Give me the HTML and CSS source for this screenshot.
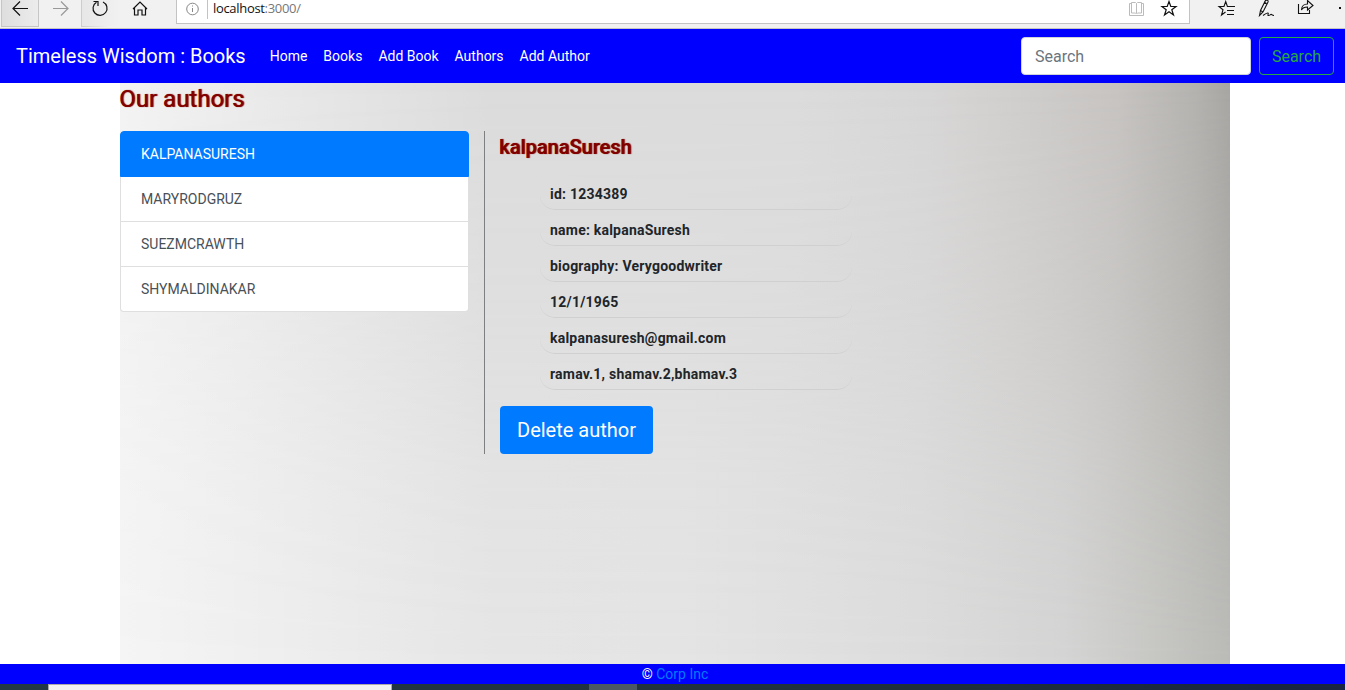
FILE: index.html
```
<!DOCTYPE html>
<html lang="en">
<head>
<meta charset="utf-8">
<title>Timeless Wisdom : Books</title>
<link rel="stylesheet" href="styles.css">
</head>
<body>
<div class="browser">
  <div class="tool back"><svg width="37" height="26" viewBox="2 0 37 26"><path d="M13 8.500h15M20 1.500l-7 7 7 7"/></svg></div>
  <div class="tool forward"><svg width="42" height="26" viewBox="39 0 42 26"><path d="M53 8.500h15M61 1.500l7 7-7 7"/></svg></div>
  <div class="tool reload"><svg width="38" height="26" viewBox="82 0 38 26"><path d="M103 2a7 7 0 1 1-6.500.3M93.500 1.500h4.500v4.500"/></svg></div>
  <div class="tool home"><svg width="56" height="26" viewBox="120 0 56 26"><path d="M133 9l7-7 7 7M134.500 8v7h3.500v-5h4v5h3.500V8"/></svg></div>
  <div class="address">
    <svg class="info" width="30" height="23" viewBox="177 0 30 23"><circle cx="192.500" cy="9" r="5.800"/><path d="M192.500 8v4M192.500 5.500v1"/></svg>
    <span class="url">localhost<span class="port">:3000/</span></span>
    <svg class="reader" width="30" height="23" viewBox="1122 0 30 23"><path d="M1131.500 3.500h-2v12h14v-12h-2M1136.500 3.500v9.500M1131.500 2.500h4l1 1 1-1h4v10.500h-4l-1 1-1-1h-4z"/></svg>
    <svg class="fav" width="37" height="23" viewBox="1152 0 37 23"><path d="M1169 1.500l1.800 5h5.200l-4.200 3.200 1.700 5.300-4.500-3.200-4.500 3.200 1.700-5.300L1162 6.500h5.200z"/></svg>
  </div>
  <svg class="actions" width="155" height="28" viewBox="1190 0 155 28"><path d="M1225.500 12l-4 3 1.500-5.300-4-3.200h5l1.700-5 1.700 5h7.600M1227 10.500h7M1227 14.500h7"/><path d="M1259.500 15.500l1-5L1265.500.5c1.500-1 3 0 2.500 1.500l-5 10zM1264 2l2.500 1.500M1260.500 10.500l2.500 1.500M1263 15.500c2-1.500 4-3 5-2.500s-1 2.500.5 2.500 2-1.500 3-1 .5 1 2.500 1"/><path d="M1298.500 4v9.500h11V10M1301.500 10c0-4 3-6 6-6V.5l5.500 5-5.500 4.500V7c-3 0-5 1-6 3z"/><path class="dot" d="M1339 7h2v2h-2z"/></svg>
</div>
<nav class="navbar">
  <a class="brand">Timeless Wisdom : Books</a>
  <div class="links"><a>Home</a><a>Books</a><a>Add Book</a><a>Authors</a><a>Add Author</a></div>
  <form class="search"><input type="text" placeholder="Search"><button type="button">Search</button></form>
</nav>
<main class="page">
  <h1 class="title">Our authors</h1>
  <div class="columns">
    <div class="authors">
      <a class="author active">KALPANASURESH</a>
      <a class="author">MARYRODGRUZ</a>
      <a class="author">SUEZMCRAWTH</a>
      <a class="author">SHYMALDINAKAR</a>
    </div>
    <section class="detail">
      <h2 class="name">kalpanaSuresh</h2>
      <ul class="facts">
        <li>id: 1234389</li>
        <li>name: kalpanaSuresh</li>
        <li>biography: Verygoodwriter</li>
        <li>12/1/1965</li>
        <li>kalpanasuresh@gmail.com</li>
        <li>ramav.1, shamav.2,bhamav.3</li>
      </ul>
      <button class="delete" type="button">Delete author</button>
    </section>
  </div>
</main>
<footer class="footer">© <a>Corp Inc</a></footer>
<div class="taskbar"><div class="task-search"></div><div class="task-active"></div></div>
</body>
</html>
```
FILE: styles.css
```
* { box-sizing: border-box; }
body {
  margin: 0;
  height: 690px;
  overflow: hidden;
  display: flex;
  flex-direction: column;
  background: #fff;
  color: #212529;
  font: 14px/1.5 Roboto, sans-serif;
}
svg { display: block; fill: none; stroke: #111; stroke-width: 1.2; flex: none; }

/* Browser toolbar */
.browser { display: flex; align-items: flex-start; height: 29px; flex: none; padding-left: 1px; background: #f1f1f1; border-bottom: 1px solid #c3c3c3; }
.tool { height: 27px; }
.back { width: 38px; background: linear-gradient(90deg, #dedede, #ececec); border: solid #c6c6c6; border-width: 0 1px 1px; }
.forward { width: 42px; }
.forward svg { stroke: #999; }
.reload { width: 39px; border: solid #d0d0d0; border-width: 0 0 1px 1px; border-image: linear-gradient(90deg, #ccc, #f1f1f1 70%) 1; background: linear-gradient(90deg, #e7e7e7, #f1f1f1); }
.home { width: 56px; }
.address { display: flex; width: 1014px; height: 24px; background: #fff; border: solid #c3c3c3; border-width: 0 1px 1px; }
.info { stroke: #888; stroke-width: 1; }
.url { flex: 1; height: 19px; padding-left: 5px; border-left: 1px solid #c3c3c3; font: 13px/17px "Open Sans", sans-serif; letter-spacing: -.32px; color: #111; }
.port { color: #777; }
.reader { stroke: #bbb; stroke-width: 1; }
.actions { stroke-width: 1.1; }
.dot { fill: #111; stroke: none; }

/* Site navigation */
.navbar { display: flex; align-items: center; height: 54px; flex: none; padding: 0 11px 0 16px; background: #00f; color: #fff; }
.brand { font-size: 20px; margin-right: 24px; }
.links { display: flex; gap: 16px; }
.search { display: flex; gap: 8px; margin-left: auto; }
.search input { width: 230px; height: 38px; padding: 6px 13px; border: 1px solid #ced4da; border-radius: 4px; font: 16px/24px Roboto, sans-serif; }
.search input::placeholder { color: #6c757d; }
.search button { width: 75px; height: 38px; padding: 2px 0 0; border: 1px solid #28a745; border-radius: 4px; background: none; color: #28a745; font: 16px/24px Roboto, sans-serif; }

/* Authors page over a softly lit backdrop */
.page {
  position: relative;
  z-index: 0;
  flex: 1;
  width: 1110px;
  margin-left: 120px;
  background: linear-gradient(90deg, #f6f5f5 0%, #ededed 18%, #e6e6e6 34%, #e5e5e5 50%, #dddddd 72%, #d5d5d5 85%, #c8c8c5 93%, #bbbbb8 100%);
}
.page::before {
  content: "";
  position: absolute;
  inset: 0;
  z-index: -1;
  background: linear-gradient(91deg, #f2f2f2 0%, #e8e8e8 14%, #dbdbdb 33%, #dbdbdb 60%, #d7d6d6 72%, #d0cecc 80%, #c6c3c1 89%, #b4b2af 96%, #a3a29f 100%);
  mask-image: linear-gradient(#000, rgba(0, 0, 0, .65) 38%, rgba(0, 0, 0, .25) 68%, transparent);
}
.title, .name { margin: 0 0 0 -1px; line-height: 1.2; color: maroon; }
.title { height: 48px; padding-top: 2px; font-size: 24px; font-weight: 400; text-shadow: 1px 0 1px maroon; }
.columns { display: flex; align-items: flex-start; }
.authors { width: 349px; margin-right: 15px; display: flex; flex-direction: column; }
.author { margin: 0 .5px -1px 0; padding: 12px 20px; border: 1px solid rgba(0, 0, 0, .125); background: #fff; color: #495057; height: 46px; line-height: 21px; }
.author.active { position: relative; margin-right: 0; border-color: #007bff; border-radius: 4px 4px 0 0; background: #007bff; color: #fff; }
.author:last-child { border-radius: 0 0 4px 4px; }
.detail { height: 323px; padding-left: 15px; border-left: 1px solid #7d7f81; }
.name { height: 43px; padding-top: 4px; font-size: 20px; font-weight: 500; text-shadow: 1px 0 1px maroon; }
.facts { margin: 0 0 16px 40px; padding: 0; width: 312px; list-style: none; font-weight: 700; letter-spacing: .22px; }
.facts li { height: 36px; padding: 10px 10px 0; line-height: 21px; border-bottom: 1px solid #d0d0d0; border-radius: 15px; }
.delete { display: block; width: 153px; height: 48px; padding: 0; border: 0; border-radius: 4px; background: #007bff; color: #fff; font: 20px/30px Roboto, sans-serif; }

.footer { height: 20px; flex: none; text-align: center; color: #fff; line-height: 20px; padding-left: 5px; background: #00f; }
.footer a { color: #007bff; }
.taskbar { display: flex; height: 6px; flex: none; padding-left: 48px; background: linear-gradient(90deg, #233943, #1f303c 70%, #192542); }
.task-search { width: 344px; background: #f1f1f1; border: solid #aaa; border-width: 1px 1px 0; }
.task-active { width: 48px; margin-left: 197px; background: #4c5963; }
```
